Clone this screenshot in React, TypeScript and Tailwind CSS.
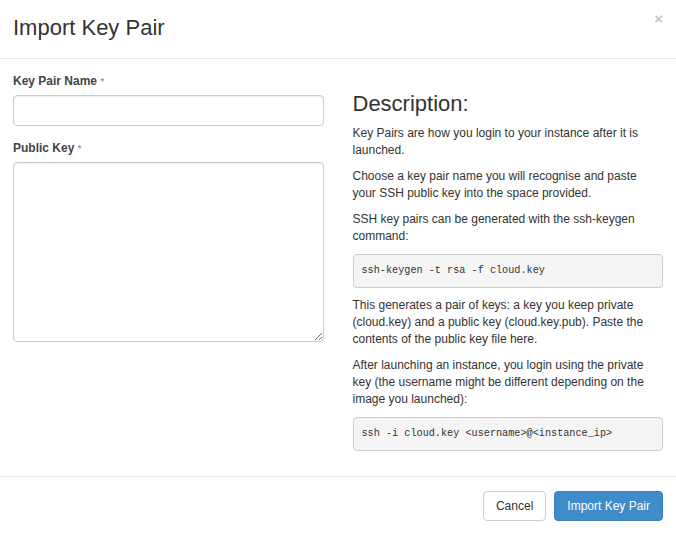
export default function App() {
  const para = "text-[12px] leading-[17px] text-[#333] mb-[9px]";
  const pre =
    "font-['Liberation_Mono',monospace] text-[10.2px] leading-[14px] text-[#333] bg-[#f5f5f5] border border-[#ccc] rounded-[4px] px-[8px] py-[9px] mb-[9px] whitespace-pre";

  return (
    <div className="w-[676px] h-[535px] bg-white flex flex-col font-['Liberation_Sans',Arial,sans-serif] text-[#333]">
      {/* header */}
      <div className="h-[59px] border-b border-[#e5e5e5] px-[13px] flex justify-between items-start">
        <h4 className="mt-[15px] text-[22px] leading-[26px] text-[#333]">Import Key Pair</h4>
        <span className="mt-[11px] text-[15px] font-bold leading-[15px] text-[#c8c8c8]">×</span>
      </div>

      {/* body */}
      <div className="flex-1 px-[13px] pt-[14px] grid grid-cols-2 gap-[29px] items-start">
        <div className="flex flex-col">
          <label className="text-[12px] leading-[17px] font-bold text-[#444] mb-[5px]">
            Key Pair Name <span className="text-[9px] align-top text-[#8a9bb0]">*</span>
          </label>
          <input className="h-[31px] border border-[#ccc] rounded-[4px] shadow-[inset_0_1px_1px_rgba(0,0,0,0.075)] px-[10px] text-[12px] outline-none" />
          <label className="mt-[14px] text-[12px] leading-[17px] font-bold text-[#444] mb-[5px]">
            Public Key <span className="text-[9px] align-top text-[#8a9bb0]">*</span>
          </label>
          <textarea className="h-[180px] border border-[#ccc] rounded-[4px] shadow-[inset_0_1px_1px_rgba(0,0,0,0.075)] px-[10px] py-[6px] text-[12px] outline-none" />
        </div>

        <div className="flex flex-col">
          <h3 className="mt-[19px] mb-[9px] text-[22px] leading-[24px] text-[#333]">Description:</h3>
          <p className={para}>Key Pairs are how you login to your instance after it is launched.</p>
          <p className={para}>
            Choose a key pair name you will recognise and paste your SSH public key into the space provided.
          </p>
          <p className={para}>SSH key pairs can be generated with the ssh-keygen command:</p>
          <pre className={pre}>ssh-keygen -t rsa -f cloud.key</pre>
          <p className={para}>
            This generates a pair of keys: a key you keep private (cloud.key) and a public key (cloud.key.pub). Paste
            the contents of the public key file here.
          </p>
          <p className={para}>
            After launching an instance, you login using the private key (the username might be different depending on
            the image you launched):
          </p>
          <pre className={pre}>{"ssh -i cloud.key <username>@<instance_ip>"}</pre>
        </div>
      </div>

      {/* footer */}
      <div className="border-t border-[#e5e5e5] px-[13px] pt-[14px] pb-[14px] flex justify-end gap-[8px]">
        <button className="h-[30px] px-[12px] text-[12px] text-[#333] bg-white border border-[#ccc] rounded-[4px]">
          Cancel
        </button>
        <button className="h-[30px] px-[12px] text-[12px] text-white bg-[#3f8ccb] border border-[#3a80bb] rounded-[4px]">
          Import Key Pair
        </button>
      </div>
    </div>
  );
}
